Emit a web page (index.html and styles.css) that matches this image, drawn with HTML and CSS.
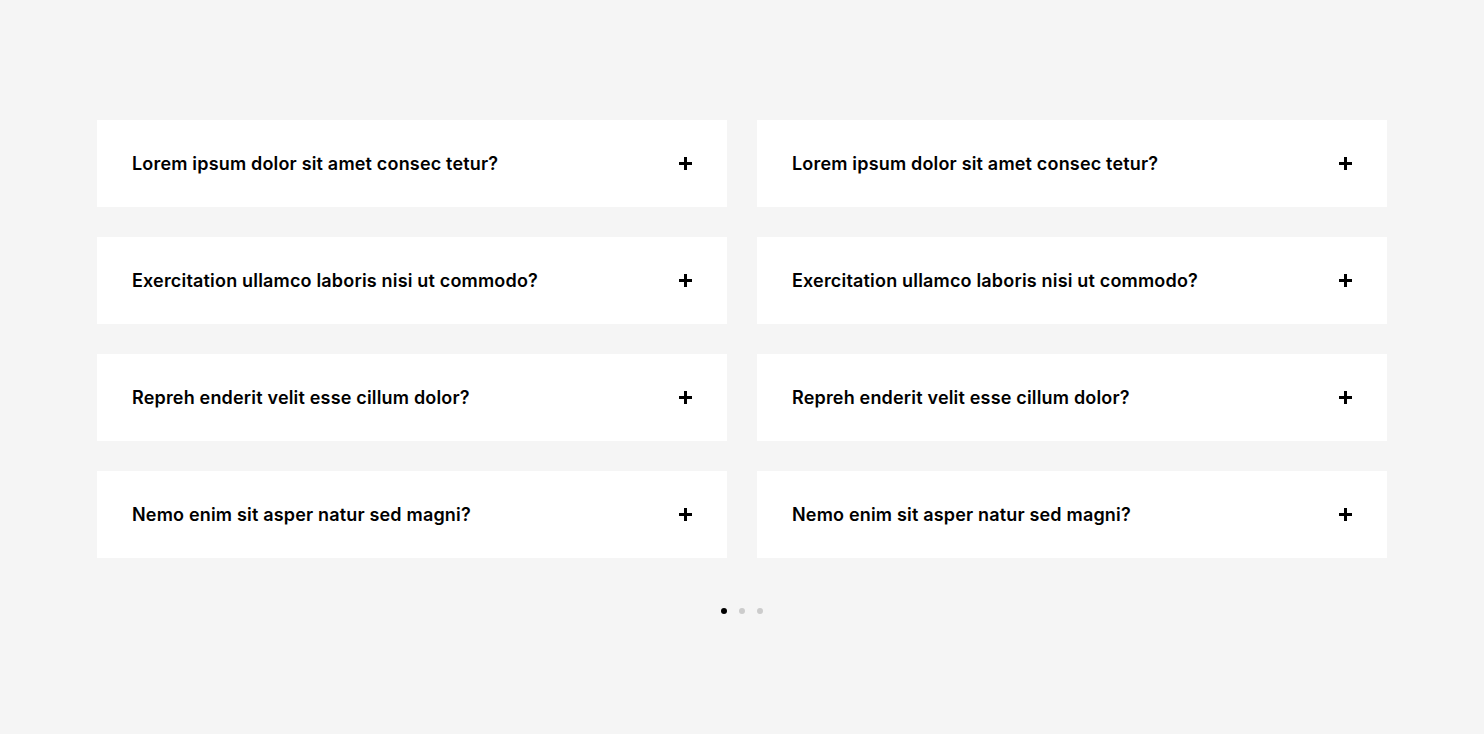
FILE: index.html
```html
<!DOCTYPE html>
<html lang="en">
<head>
<meta charset="utf-8">
<title>FAQ</title>
<link rel="stylesheet" href="styles.css">
</head>
<body>
<section class="faq">
  <div class="grid">
    <div class="item"><span class="q">Lorem ipsum dolor sit amet consec tetur?</span><span class="plus"></span></div>
    <div class="item"><span class="q">Lorem ipsum dolor sit amet consec tetur?</span><span class="plus"></span></div>
    <div class="item"><span class="q">Exercitation ullamco laboris nisi ut commodo?</span><span class="plus"></span></div>
    <div class="item"><span class="q">Exercitation ullamco laboris nisi ut commodo?</span><span class="plus"></span></div>
    <div class="item"><span class="q">Repreh enderit velit esse cillum dolor?</span><span class="plus"></span></div>
    <div class="item"><span class="q">Repreh enderit velit esse cillum dolor?</span><span class="plus"></span></div>
    <div class="item"><span class="q">Nemo enim sit asper natur sed magni?</span><span class="plus"></span></div>
    <div class="item"><span class="q">Nemo enim sit asper natur sed magni?</span><span class="plus"></span></div>
  </div>
  <div class="dots">
    <span class="dot active"></span>
    <span class="dot"></span>
    <span class="dot"></span>
  </div>
</section>
</body>
</html>
```
FILE: styles.css
```css
html, body {
  margin: 0;
  padding: 0;
  background: #f5f5f5;
}
body {
  font-family: Inter, "Open Sans", sans-serif;
  color: #000;
  height: 734px;
}
.faq {
  width: 1290px;
  margin: 0 auto;
  padding-top: 120px;
}
.grid {
  display: grid;
  grid-template-columns: 1fr 1fr;
  gap: 30px;
}
.item {
  background: #fff;
  height: 87px;
  box-sizing: border-box;
  padding: 0 35px;
  display: flex;
  align-items: center;
  justify-content: space-between;
}
.q {
  font-size: 18px;
  font-weight: 600;
  letter-spacing: 0.18px;
}
.plus {
  position: relative;
  width: 13px;
  height: 13px;
  flex: none;
}
.plus::before, .plus::after {
  content: "";
  position: absolute;
  background: #000;
}
.plus::before {
  left: 0;
  top: 5px;
  width: 13px;
  height: 3px;
}
.plus::after {
  top: 0;
  left: 5px;
  width: 3px;
  height: 13px;
}
.dots {
  display: flex;
  justify-content: center;
  gap: 12px;
  margin-top: 50px;
}
.dot {
  width: 6px;
  height: 6px;
  border-radius: 50%;
  background: #ccc;
}
.dot.active {
  background: #000;
}
```
